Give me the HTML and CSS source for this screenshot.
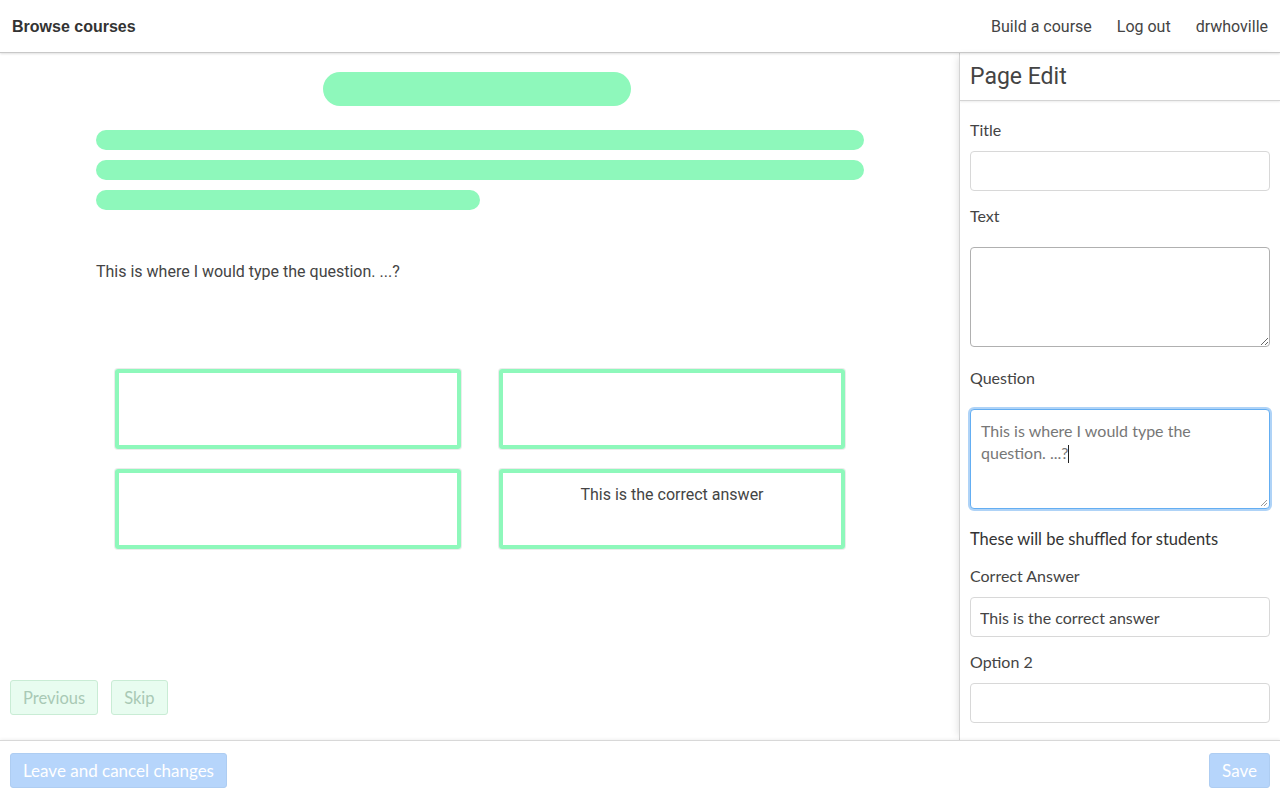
FILE: index.html
```html
<!DOCTYPE html>
<html lang="en">
<head>
<meta charset="utf-8">
<title>Page Edit</title>
<link rel="stylesheet" href="styles.css">
</head>
<body>
<header class="topbar">
  <a class="brand" href="#">Browse courses</a>
  <nav class="nav">
    <a href="#">Build a course</a>
    <a href="#">Log out</a>
    <a href="#">drwhoville</a>
  </nav>
</header>
<main class="workspace">
  <section class="preview">
    <div class="content">
      <div class="title-pill"></div>
      <div class="text-lines">
        <div class="line"></div>
        <div class="line"></div>
        <div class="line short"></div>
      </div>
      <p class="question">This is where I would type the question. ...?</p>
      <div class="answers">
        <div class="answer"></div>
        <div class="answer"></div>
        <div class="answer"></div>
        <div class="answer">This is the correct answer</div>
      </div>
    </div>
    <div class="pager">
      <button class="btn-green">Previous</button>
      <button class="btn-green">Skip</button>
    </div>
  </section>
  <aside class="editor">
    <h2 class="editor-title">Page Edit</h2>
    <div class="form">
      <label class="label">Title</label>
      <input class="field" type="text">
      <label class="label">Text</label>
      <textarea class="area"></textarea>
      <label class="label">Question</label>
      <div class="area focused">This is where I would type the question. ...?<span class="caret"></span></div>
      <p class="note">These will be shuffled for students</p>
      <label class="label">Correct Answer</label>
      <input class="field" type="text" value="This is the correct answer">
      <label class="label">Option 2</label>
      <input class="field" type="text">
    </div>
  </aside>
</main>
<footer class="actions">
  <button class="btn-blue">Leave and cancel changes</button>
  <button class="btn-blue">Save</button>
</footer>
</body>
</html>
```
FILE: styles.css
```css
* { box-sizing: border-box; }
html, body { margin: 0; height: 100%; }
body {
  font-family: Roboto, "Liberation Sans", sans-serif;
  color: #333;
  background: #fff;
  display: flex;
  flex-direction: column;
  height: 800px;
  overflow: hidden;
}
a { color: inherit; text-decoration: none; }

.topbar {
  height: 53px;
  flex: none;
  display: flex;
  align-items: center;
  justify-content: space-between;
  padding: 1px 12px 0 12px;
  border-bottom: 1px solid #c8c8c8;
  box-shadow: 0 1px 2px rgba(0,0,0,0.12);
  position: relative;
  z-index: 2;
  font-size: 16px;
}
.brand {
  font-family: "Liberation Sans", Arial, sans-serif;
  font-weight: 700;
  color: #333;
}
.nav { display: flex; gap: 25px; color: #444; }

.workspace {
  flex: 1;
  display: flex;
  min-height: 0;
}
.preview {
  flex: 1;
  display: flex;
  flex-direction: column;
  padding: 19px 0 25px 0;
}
.content {
  width: 768px;
  margin-left: 96px;
  display: flex;
  flex-direction: column;
}
.title-pill {
  width: 308px;
  height: 34px;
  border-radius: 17px;
  background: #8ef8bb;
  align-self: center;
  margin-right: 6px;
}
.text-lines {
  display: flex;
  flex-direction: column;
  gap: 10px;
  margin-top: 24px;
}
.line {
  height: 20px;
  border-radius: 10px;
  background: #8ef8bb;
}
.line.short { width: 384px; }
.question {
  margin: 52px 0 0 0;
  font-size: 16px;
  line-height: 20px;
  color: #444;
}
.answers {
  margin: 87px 19px 0 19px;
  display: grid;
  grid-template-columns: 346px 346px;
  column-gap: 38px;
  row-gap: 20px;
}
.answer {
  height: 80px;
  border: 4px solid #8ef8bb;
  border-radius: 3px;
  box-shadow: 0 0 0 1px rgba(0,0,0,0.08);
  text-align: center;
  font-size: 16px;
  color: #444;
  padding-top: 12px;
}
.pager {
  margin-top: auto;
  padding-left: 10px;
  display: flex;
  gap: 13px;
}
.btn-green {
  font-family: Lato, "Open Sans", sans-serif;
  font-size: 16.5px;
  height: 35px;
  padding: 0 12px;
  background: #e8fcf0;
  border: 1px solid #c9ecd5;
  border-radius: 3px;
  color: #a9c9b5;
}

.editor {
  width: 321px;
  flex: none;
  border-left: 1px solid #d4d4d4;
  box-shadow: -4px 0 8px -4px rgba(0,0,0,0.15);
  display: flex;
  flex-direction: column;
  overflow: hidden;
  font-family: Lato, "Open Sans", sans-serif;
}
.editor-title {
  margin: 0;
  height: 48px;
  flex: none;
  padding: 10px 10px 0 10px;
  font-family: Roboto, "Liberation Sans", sans-serif;
  font-weight: 400;
  font-size: 23px;
  line-height: 28px;
  color: #444;
  border-bottom: 1px solid #d4d4d4;
  box-shadow: 0 1px 2px rgba(0,0,0,0.08);
}
.form {
  padding: 19px 10px 0 10px;
  display: flex;
  flex-direction: column;
}
.label {
  font-size: 16px;
  line-height: 20px;
  color: #444;
  margin-bottom: 11px;
}
.field {
  font-family: Lato, "Open Sans", sans-serif;
  font-size: 16px;
  height: 40px;
  border: 1px solid #d8d8d8;
  border-radius: 4px;
  padding: 0 9px;
  color: #444;
  margin-bottom: 15px;
  outline: none;
}
.area {
  font-family: Lato, "Open Sans", sans-serif;
  font-size: 16px;
  line-height: 22px;
  height: 100px;
  margin-top: 10px;
  margin-bottom: 21px;
  border: 1px solid #b0b0b0;
  border-radius: 4px;
  padding: 10px;
  color: #777;
  resize: vertical;
  display: block;
  position: relative;
}
.area.focused {
  border: 1px solid #64aef2;
  box-shadow: 0 0 0 2px rgba(110,175,240,0.55);
  background: #fff;
  margin-bottom: 20px;
}
.area.focused::after {
  content: "";
  position: absolute;
  right: 2px;
  bottom: 2px;
  width: 6px;
  height: 6px;
  background: linear-gradient(135deg, transparent 45%, #999 45%, #999 55%, transparent 55%, transparent 70%, #999 70%, #999 80%, transparent 80%);
}
.caret {
  display: inline-block;
  width: 1px;
  height: 18px;
  background: #222;
  vertical-align: -4px;
}
.note {
  margin: 0 0 17px 0;
  font-size: 16.5px;
  line-height: 20px;
  color: #333;
}

.actions {
  height: 60px;
  flex: none;
  border-top: 1px solid #d8d8d8;
  box-shadow: 0 -1px 3px rgba(0,0,0,0.06);
  display: flex;
  align-items: center;
  justify-content: space-between;
  padding: 0 10px 1px 10px;
  position: relative;
  z-index: 2;
  background: #fff;
}
.btn-blue {
  font-family: Lato, "Open Sans", sans-serif;
  font-size: 17px;
  height: 35px;
  padding: 0 12px;
  background: #b6d5fb;
  border: 1px solid #aecdf2;
  border-radius: 3px;
  color: #fff;
}
```
